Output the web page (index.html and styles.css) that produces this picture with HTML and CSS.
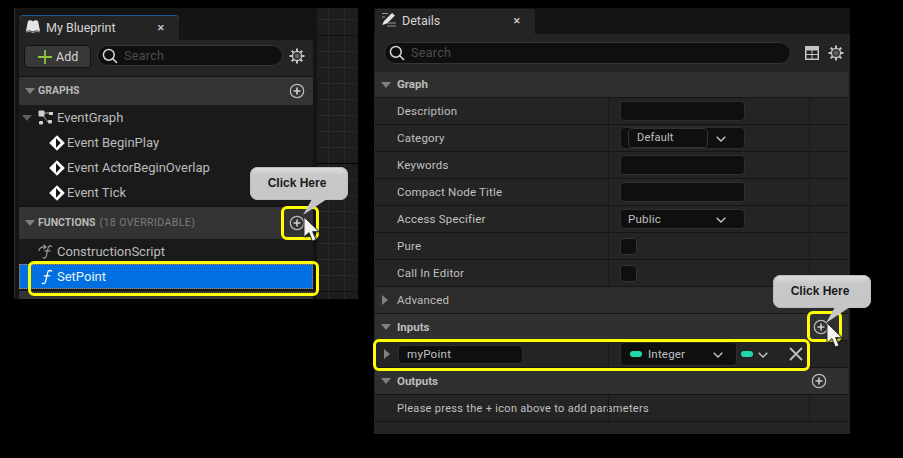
FILE: index.html
```html
<!DOCTYPE html>
<html lang="en">
<head>
<meta charset="utf-8">
<title>My Blueprint and Details</title>
<link rel="stylesheet" href="styles.css">
</head>
<body>
<svg class="defs" width="0" height="0" aria-hidden="true">
  <defs>
    <symbol id="search" viewBox="0 0 16 16"><circle cx="6.8" cy="6.8" r="5.4" fill="none" stroke="#d8d8d8" stroke-width="1.5"/><path d="M10.8 10.8 15 15" stroke="#d8d8d8" stroke-width="1.6" fill="none"/></symbol>
    <symbol id="gear" viewBox="0 0 16 16"><path d="M8 .5v3M8 12.500v3M.5 8h3M12.500 8h3M2.700 2.700l2.100 2.100M11.200 11.200l2.100 2.100M13.300 2.700l-2.100 2.100M4.800 11.200l-2.100 2.100" stroke="#c4c4c4" stroke-width="2" fill="none"/><circle cx="8" cy="8" r="4.600" fill="#3a3a3a" stroke="#c4c4c4" stroke-width="1.300"/><circle cx="8" cy="8" r="2" fill="#666"/></symbol>
    <symbol id="plus" viewBox="0 0 16 16"><circle cx="8" cy="8" r="6.700" fill="none" stroke="#bdbdbd" stroke-width="1.200"/><path d="M8 4.500v7M4.500 8h7" stroke="#d0d0d0" stroke-width="1.600" fill="none"/></symbol>
    <symbol id="chev" viewBox="0 0 10 6"><path d="M.7.7 5 5 9.300.7" fill="none" stroke="#c8c8c8" stroke-width="1.300"/></symbol>
    <symbol id="diamond" viewBox="0 0 16 16"><path d="M8 .2 15.800 8 8 15.800.2 8Z" fill="#fff"/><path d="M7 3.300 11.700 8 7 12.700Z" fill="#151515"/></symbol>
    <symbol id="fn" viewBox="0 0 14 16"><path d="M12 2.200C9.600.8 8 1.600 7.500 4.200L5.700 12.200C5.200 14.600 3.800 15.200 1.800 14M3.800 6.800h6.400" fill="none" stroke="currentColor" stroke-width="1.300"/></symbol>
    <symbol id="cursor" viewBox="0 0 17 27"><path d="M1 1v20l5-4.400 3.400 8.400 3.600-1.400-3.400-8H16Z" fill="#f4f4f4" stroke="#333" stroke-width="1"/></symbol>
  </defs>
</svg>

<section class="window blueprint">
  <div class="panel-col">
    <div class="tab">
      <svg class="tab-icon" width="16" height="15" viewBox="0 0 16 15"><path d="M1 12 3 2c2-1 3.500-.8 5 .4C9.500 1.200 11 1 13 2l2 10c-2-.8-5-.8-7 .6C6 11.200 3 11.200 1 12Z" fill="#e4e4e4"/><path d="M1 13c2.500-.8 5-.6 7 .8 2-1.400 4.500-1.600 7-.8" stroke="#999" fill="none"/></svg>
      <span class="tab-title">My Blueprint</span>
      <span class="tab-x">✕</span>
    </div>
    <div class="toolbar bp-toolbar">
      <button class="add-btn"><svg width="14" height="14" viewBox="0 0 14 14"><path d="M7 0v14M0 7h14" stroke="#8fc43c" stroke-width="1.800"/></svg>Add</button>
      <div class="search bp-search"><svg width="16" height="16"><use href="#search"/></svg><span>Search</span></div>
      <svg class="gear" width="16" height="16"><use href="#gear"/></svg>
    </div>
    <div class="bp-section graphs-head">
      <i class="tri"></i><b>GRAPHS</b>
      <svg class="sec-plus" width="16" height="16"><use href="#plus"/></svg>
    </div>
    <div class="bp-row eventgraph">
      <i class="tri dim"></i>
      <svg class="row-icon" width="16" height="15" viewBox="0 0 16 15"><path d="M3 3h8M3 3l7 9" stroke="#aaa" fill="none"/><rect x=".5" y=".5" width="6" height="6" rx="1" fill="#d0d0d0"/><rect x="11" y="2" width="4" height="3" fill="#d0d0d0"/><rect x="1" y="11" width="4" height="3.500" rx="1" fill="#d0d0d0"/><rect x="10" y="10" width="4" height="3.500" rx="1" fill="#d0d0d0"/></svg>
      <span>EventGraph</span>
    </div>
    <div class="bp-row event"><svg width="16" height="16"><use href="#diamond"/></svg><span>Event BeginPlay</span></div>
    <div class="bp-row event"><svg width="16" height="16"><use href="#diamond"/></svg><span>Event ActorBeginOverlap</span></div>
    <div class="bp-row event"><svg width="16" height="16"><use href="#diamond"/></svg><span>Event Tick</span></div>
    <div class="bp-section functions-head">
      <i class="tri"></i><b>FUNCTIONS</b><em>(18 OVERRIDABLE)</em>
      <svg class="sec-plus" width="16" height="16"><use href="#plus"/></svg>
    </div>
    <div class="bp-row construction">
      <svg class="row-icon fn-dim" width="16" height="16" viewBox="0 0 16 16"><use href="#fn" x="3" width="13" height="16"/><path d="M1 7C1.500 3.500 3.500 2.500 7 3M5.500 .8 8 3 5.500 5" fill="none" stroke="#999" stroke-width="1.200"/></svg>
      <span>ConstructionScript</span>
    </div>
    <div class="bp-row selected">
      <svg class="row-icon fn-lit" width="14" height="16"><use href="#fn"/></svg>
      <span>SetPoint</span>
    </div>
    <div class="bp-section stub"></div>
  </div>
  <div class="graph"></div>
</section>

<section class="window details">
  <div class="tab details-tab">
    <svg class="tab-icon" width="16" height="15" viewBox="0 0 16 15"><path d="M1 1.500h6M1 5h3M7 11h8M6 14h9" stroke="#999" stroke-width="1.200" fill="none"/><path d="M1 13 3 9 11 1l3 2.500-8 8Z" fill="#e4e4e4"/></svg>
    <span class="tab-title">Details</span>
    <span class="tab-x">✕</span>
  </div>
  <div class="toolbar dt-toolbar">
    <div class="search dt-search"><svg width="16" height="16"><use href="#search"/></svg><span>Search</span></div>
    <svg class="table-icon" width="14" height="14" viewBox="0 0 14 14"><path d="M0 0h14v14H0Z" fill="#c4c4c4"/><path d="M1.500 4.500h5v3.500h-5ZM7.500 4.500h5v3.500h-5ZM1.500 9h5v3.500h-5ZM7.500 9h5v3.500h-5Z" fill="#242424"/></svg>
    <svg class="gear" width="16" height="16"><use href="#gear"/></svg>
  </div>
  <div class="dt-head graph-head">
    <i class="tri"></i><b>Graph</b>
  </div>
  <div class="dt-row"><label>Description</label><div class="val"><div class="field"></div></div><div class="end"></div></div>
  <div class="dt-row"><label>Category</label><div class="val"><div class="field combo category"><span class="inner">Default</span><svg class="chev" width="10" height="6"><use href="#chev"/></svg></div></div><div class="end"></div></div>
  <div class="dt-row"><label>Keywords</label><div class="val"><div class="field"></div></div><div class="end"></div></div>
  <div class="dt-row"><label>Compact Node Title</label><div class="val"><div class="field"></div></div><div class="end"></div></div>
  <div class="dt-row"><label>Access Specifier</label><div class="val"><div class="field combo"><span>Public</span><svg class="chev" width="10" height="6"><use href="#chev"/></svg></div></div><div class="end"></div></div>
  <div class="dt-row"><label>Pure</label><div class="val"><div class="check"></div></div><div class="end"></div></div>
  <div class="dt-row"><label>Call In Editor</label><div class="val"><div class="check"></div></div><div class="end"></div></div>
  <div class="dt-head advanced"><i class="tri right"></i><span>Advanced</span></div>
  <div class="dt-head inputs"><i class="tri"></i><b>Inputs</b><div class="end"><svg width="16" height="16"><use href="#plus"/></svg></div></div>
  <div class="dt-row param">
    <label><i class="tri right"></i><span class="name">myPoint</span></label>
    <div class="val">
      <div class="field combo type"><i class="pill small"></i><span>Integer</span><svg class="chev" width="10" height="6"><use href="#chev"/></svg></div>
      <i class="pill"></i><svg class="chev plain" width="10" height="6"><use href="#chev"/></svg>
      <svg class="close" width="14" height="14" viewBox="0 0 14 14"><path d="M1 1l12 12M13 1 1 13" stroke="#bdbdbd" stroke-width="1.800"/></svg>
    </div>
    <div class="end"></div>
  </div>
  <div class="dt-head outputs"><i class="tri"></i><b>Outputs</b><div class="end"><svg width="16" height="16"><use href="#plus"/></svg></div></div>
  <div class="dt-row note"><label>Please press the + icon above to add parameters</label><div class="val"></div><div class="end"></div></div>
</section>

<div class="mark m-fn-plus"></div>
<div class="mark m-setpoint"></div>
<div class="mark m-in-plus"></div>
<div class="mark m-param"></div>

<div class="callout c-left">Click Here<svg class="tail" width="26" height="17" viewBox="0 0 26 17"><path d="M9 0 0 16 24 0Z" fill="#c6c6c6"/></svg></div>
<div class="callout c-right">Click Here<svg class="tail" width="26" height="17" viewBox="0 0 26 17"><path d="M9 0 0 16 24 0Z" fill="#c6c6c6"/></svg></div>
<svg class="cursor cur-left" width="17" height="27"><use href="#cursor"/></svg>
<svg class="cursor cur-right" width="17" height="27"><use href="#cursor"/></svg>
</body>
</html>
```
FILE: styles.css
```css
* { box-sizing: border-box; }
html, body { margin: 0; height: 100%; }
body {
  background: #000;
  font-family: Roboto, "Open Sans", sans-serif;
  font-size: 12px;
  color: #c0c0c0;
  position: relative;
  overflow: hidden;
}
.defs { position: absolute; }
svg { display: block; flex: none; }

.window { position: absolute; background: #141414; }
.blueprint {
  left: 14px; top: 8px; width: 344px; height: 291px;
  display: flex;
  border-left: 1px solid #2c2c2c;
}
.details {
  left: 374px; top: 8px; width: 476px; height: 426px;
  padding: 1px 2px 0 1px;
  display: flex; flex-direction: column;
  background: linear-gradient(#141414 26px, #242424 26px);
}

.panel-col {
  width: 302px;
  padding: 7px 4px 0 4px;
  display: flex; flex-direction: column;
}
.graph {
  flex: 1;
  background-color: #1d1d1d;
  background-image:
    linear-gradient(#111 0 0),
    linear-gradient(#000 0 0),
    linear-gradient(#111 0 0),
    repeating-linear-gradient(90deg, transparent 0 11px, #292929 11px 12px, transparent 12px 16px),
    repeating-linear-gradient(transparent 0 11px, #292929 11px 12px, transparent 12px 16px);
  background-size: 100% 1px, 100% 1px, 100% 1px, auto, auto;
  background-position: 0 27px, 0 155px, 0 283px, 0 0, 0 0;
  background-repeat: no-repeat, no-repeat, no-repeat, repeat, repeat;
}

.tab {
  width: 160px; height: 25px; flex: none;
  background: #242424;
  border-top: 1px solid #1c5a96;
  border-radius: 4px 4px 0 0;
  display: flex; align-items: center;
  padding: 0 0 1px 6px;
  color: #d4d4d4;
}
.tab-icon { margin-top: -3px; }
.tab-title { margin-left: 5px; font-size: 12.5px; flex: 1; }
.tab-x { width: 22px; font-size: 9px; font-weight: 700; color: #c8c8c8; }
.details-tab { border-top-color: #2a2a2a; padding-bottom: 3px; }

.toolbar { display: flex; flex: none; background: #242424; }
.bp-toolbar { height: 36px; padding: 5px 8px 0 5px; }
.dt-toolbar { height: 38px; padding: 8px 4px 0 9px; }

.add-btn {
  width: 67px; height: 23px;
  background: #383838; border: 1px solid #111; border-radius: 4px;
  display: flex; align-items: center; gap: 4px;
  padding: 0 0 0 13px;
  font: 12.5px Roboto, sans-serif; color: #d4d4d4;
}
.search {
  background: #0f0f0f; border: 1px solid #363636; border-radius: 11px;
  display: flex; align-items: center; gap: 6px;
  padding-left: 4px;
  font-size: 12.5px; letter-spacing: .3px; color: #4c4c4c;
}
.bp-search { width: 186px; height: 21px; margin-left: 6px; }
.dt-search { width: 408px; height: 22px; padding-bottom: 1px; }
.bp-toolbar .gear { margin: 3px 0 0 6px; }
.table-icon { margin: 4px 0 0 14px; }
.dt-toolbar .gear { margin: 3px 0 0 9px; }

.tri {
  display: block; flex: none;
  width: 0; height: 0;
  border-style: solid;
  border-width: 6px 5px 0;
  border-color: #808080 transparent transparent;
}
.tri.dim { border-top-color: #5e5e5e; }
.tri.right {
  border-width: 5px 0 5px 6px;
  border-color: transparent transparent transparent #808080;
}

.bp-section {
  background: #333;
  display: flex; align-items: center;
  padding-left: 6px;
  font-size: 10.5px;
  flex: none;
  color: #b8b8b8;
}
.bp-section b { margin: -2px 0 0 3px; font-weight: 700; }
.bp-section em { margin: -2px 0 0 4px; font-style: normal; color: #7c7c7c; letter-spacing: .42px; }
.sec-plus { margin-left: auto; margin-right: 8px; }
.graphs-head { height: 28px; margin-top: 1px; }
.functions-head { height: 32px; margin-top: 2px; }
.stub { height: 8px; margin-top: 2px; }

.bp-row {
  height: 25px; flex: none;
  background: #1a1a1a;
  display: flex; align-items: center;
  font-size: 13px;
  color: #bcbcbc;
  padding-left: 19px;
}
.eventgraph { padding-left: 3px; }
.eventgraph .row-icon { margin-left: 6px; }
.eventgraph span { margin-left: 3px; }
.event { padding-left: 30px; }
.event span { margin-left: 2px; }
.construction span, .selected span { margin-left: 3px; }
.fn-dim { color: #999; }
.fn-lit { color: #fff; margin-left: 2px; }
.selected {
  background: #0070e0;
  outline: 1px dotted #e08020;
  outline-offset: -1px;
  color: #eaf2fb;
}

.dt-head, .dt-row {
  height: 27px; flex: none;
  display: grid;
  grid-template-columns: 233px 201px 39px;
  border-bottom: 1px solid #151515;
  background: #242424;
}
.dt-head {
  background: #303030;
  display: flex; align-items: center;
  padding-left: 6px;
  color: #bcbcbc;
  font-size: 11.5px;
  position: relative;
}
.graph-head { height: 26px; }
.dt-head b { margin-left: 6px; font-weight: 700; font-size: 11.5px; }
.graph-head b { margin-top: -1px; }
.dt-head span { margin-left: 9px; font-size: 11.5px; letter-spacing: .2px; margin-top: -1px; }
.dt-head .tri.right { margin-left: 1px; }
.advanced { background: #2c2c2c; }
.dt-head .end {
  position: absolute; right: 0; top: 0; bottom: 0;
  width: 39px;
  display: flex; align-items: center; padding-left: 2px;
  border-left: 0;
}
.inputs .end { border-left: 1px solid #1c1c1c; padding-left: 3px; }
.dt-row label {
  display: flex; align-items: center;
  padding-left: 22px;
  letter-spacing: .2px;
  font-size: 11.5px;
}
.val {
  border-left: 1px solid #1a1a1a;
  display: flex; align-items: center;
  padding-left: 11px;
}
.end { border-left: 1px solid #1a1a1a; }

.field {
  width: 125px; height: 20px;
  background: #0f0f0f; border: 1px solid #2e2e2e; border-radius: 4px;
}
.combo {
  display: flex; align-items: center; justify-content: space-between;
  padding: 0 18px 0 7px;
  font-size: 11.5px; letter-spacing: .2px;
}
.combo .chev { margin-top: 1px; }
.category { height: 22px; position: relative; }
.inner {
  width: 80px; height: 20px;
  background: #0f0f0f; border: 1px solid #333; border-radius: 4px;
  padding: 2px 0 0 8px;
  font-size: 11px;
}
.check { width: 17px; height: 17px; background: #0f0f0f; border: 1px solid #333; border-radius: 3px; }

.pill { display: block; width: 12px; height: 6px; background: #1fd9ac; border-radius: 3px; flex: none; }
.pill.small { margin: 0 6px 0 2px; }
.param label { padding-left: 9px; gap: 8px; }
.name {
  width: 125px; height: 19px;
  background: #0f0f0f; border: 1px solid #2c2c2c; border-radius: 4px;
  padding: 1px 0 0 8px;
  font-size: 11.5px;
  letter-spacing: .3px;
}
.type { width: 117px; justify-content: flex-start; height: 24px; padding-right: 0; margin-right: 4px; }
.type .chev { margin-left: auto; margin-right: 13px; }
.plain { margin: 1px 0 0 5px; }
.close { margin-left: 21px; }
.note label { white-space: nowrap; font-size: 11px; letter-spacing: .3px; }

.mark {
  position: absolute;
  border: 3px solid #ffff00;
  border-radius: 6px;
  pointer-events: none;
}
.m-fn-plus { left: 281px; top: 206px; width: 38px; height: 34px; }
.m-setpoint { left: 28px; top: 261px; width: 291px; height: 35px; }
.m-in-plus { left: 807px; top: 311px; width: 35px; height: 31px; }
.m-param { left: 373px; top: 339px; width: 437px; height: 32px; }

.callout {
  position: absolute;
  width: 98px; height: 33px;
  display: flex; align-items: center; justify-content: center;
  background: linear-gradient(#e0e0e0, #c8c8c8 25%, #c6c6c6);
  border-radius: 8px;
  box-shadow: inset 0 0 0 1px #bcbcbc;
  font: 700 12px "Liberation Sans", Arial, sans-serif;
  color: #1a1a1a;
  padding: 0 4px 2px 0;
}
.tail { position: absolute; left: 53px; top: 32px; }
.c-left { left: 250px; top: 167px; }
.c-right { left: 773px; top: 275px; }
.cursor { position: absolute; filter: drop-shadow(1px 1px 1px rgba(0,0,0,.5)); }
.cur-left { left: 303px; top: 216px; }
.cur-right { left: 826px; top: 322px; }
```
